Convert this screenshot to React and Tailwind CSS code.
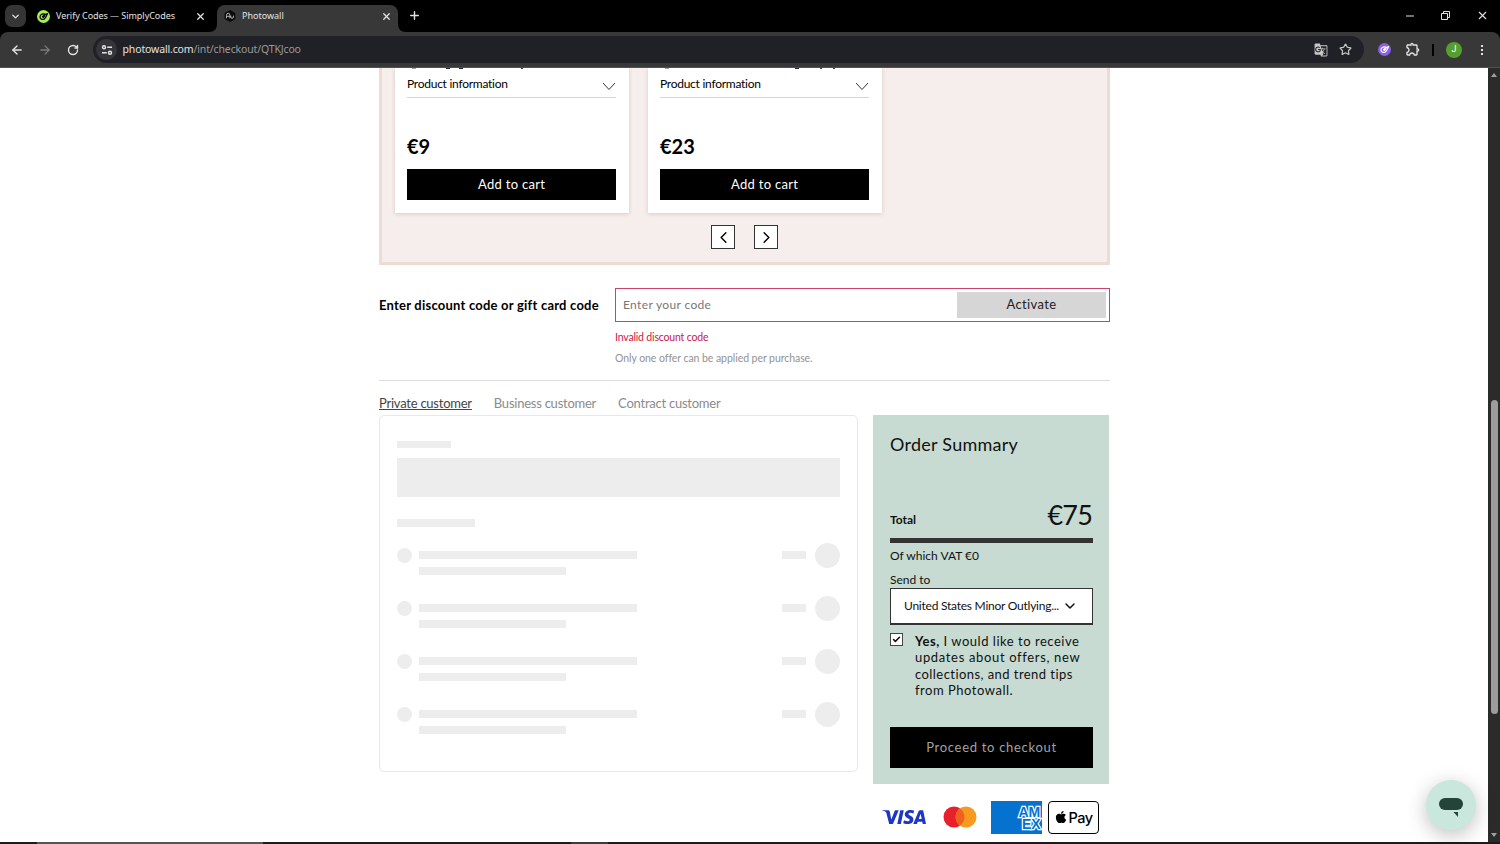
import { useState } from 'react'
import { ArrowLeft, ArrowRight, Check, ChevronDown, ChevronLeft, ChevronRight, Minus, Plus, RotateCw, Star, X } from 'lucide-react'
import { FaApple } from 'react-icons/fa'
import { MdGTranslate, MdOutlineExtension } from 'react-icons/md'
import { SiVisa } from 'react-icons/si'

const products = [
  { price: '€9', marks: ['ml-[5px] w-1 bg-gray-400', 'ml-[30px] w-1 bg-gray-800', 'ml-[9px] w-1 bg-gray-800', 'ml-[58px] w-0.5 bg-gray-700'] },
  { price: '€23', marks: ['ml-[5px] w-1 bg-gray-400', 'ml-[126px] w-1 bg-gray-800', 'ml-[21px] w-0.5 bg-gray-700', 'ml-[11px] w-0.5 bg-gray-700'] },
]

const customerTypes = ['Private customer', 'Business customer', 'Contract customer']

const LeafMark = ({ className }) => (
  <svg viewBox="0 0 13 13" className={className} fill="none" stroke="currentColor" strokeWidth="1.2" strokeLinecap="round" strokeLinejoin="round">
    <path d="M7.600 4.100C5 3.500 3 5 3 7c0 2.300 2.600 3 4.300 1.900C9 7.800 9.200 6 10.600 3.500 8.400 4 6.600 4.800 5.600 6.800" />
    <path d="M5.500 6.500l.9.900 1.600-1.700" />
  </svg>
)

const TabStrip = () => (
  <div className="flex h-8 items-start bg-black text-[#e3e3e3]">
    <button className="ml-[5px] mt-[5px] flex h-[22px] w-[21px] items-center justify-center rounded-[7px] bg-[#353535]">
      <ChevronDown size={11} strokeWidth={3} />
    </button>
    <div className="ml-[11px] flex h-8 w-[172px] items-center">
      <span className="flex h-[13px] w-[13px] items-center justify-center rounded-full bg-[#a5ee55] text-black">
        <LeafMark className="h-[13px] w-[13px]" />
      </span>
      <span className="ml-[6px] whitespace-nowrap text-[9px] tracking-[-0.05px]">Verify Codes — SimplyCodes</span>
      <X size={11} strokeWidth={2.800} className="ml-auto mr-[3.500px]" />
    </div>
    <svg viewBox="0 0 8 8" className="h-2 w-2 self-end text-[#383838]"><path d="M8 0v8H0c5 0 8-3 8-8z" fill="currentColor" /></svg>
    <div className="mt-[5px] flex h-[27px] w-[181px] items-center rounded-t-[8px] bg-[#383838] pb-[5px]">
      <svg viewBox="0 0 12 12" className="ml-[7px] h-3 w-3">
        <path d="M6 0l5.400 3v6L6 12 .6 9V3z" fill="#0b0b0d" />
        <path d="M2.500 8.300V5.500q0-2.300 1.700-2.300t1.700 2.300v2.800M2.500 6.300h3.400M6.800 5.700v1.400q0 1.200 1.300 1.200t1.300-1.200V5.700" stroke="#c9c9c9" strokeWidth=".9" fill="none" />
      </svg>
      <span className="ml-[6px] text-[9px]">Photowall</span>
      <X size={11} strokeWidth={2.800} className="ml-auto mr-[6.500px]" />
    </div>
    <svg viewBox="0 0 8 8" className="h-2 w-2 self-end text-[#383838]"><path d="M0 0v8h8C3 8 0 5 0 0z" fill="currentColor" /></svg>
    <Plus size={13} strokeWidth={2.600} className="ml-[1.500px] mt-[9px]" />
    <div className="ml-auto flex items-center pt-[9px]">
      <Minus size={12} strokeWidth={2} className="mr-[24px]" />
      <svg viewBox="0 0 11 11" className="mr-[25px] h-[11px] w-[11px]" fill="none" stroke="currentColor">
        <path d="M1.500 3.500h6v6h-6zM3.500 3V1.500h6v6H8" />
      </svg>
      <X size={13} strokeWidth={2} className="mr-[11px]" />
    </div>
  </div>
)

const Toolbar = () => (
  <div className="bg-black">
    <div className="flex h-9 items-center rounded-t-[8px] border-b border-[#55504e] bg-[#383838] text-[#e3e3e3]">
      <ArrowLeft size={14} strokeWidth={2.400} className="ml-[10px]" />
      <ArrowRight size={14} strokeWidth={2.200} className="ml-[14px] text-[#7c7c7c]" />
      <RotateCw size={12} strokeWidth={2.800} className="ml-[15px]" />
      <div className="ml-[14px] flex h-[27px] w-[1271px] items-center rounded-full bg-[#202126] pl-[3px]">
        <span className="flex h-[21px] w-[21px] items-center justify-center rounded-full bg-[#36363a]">
          <svg viewBox="0 0 12 12" className="h-3 w-3" fill="none" stroke="currentColor" strokeWidth="1.400">
            <circle cx="3" cy="3.200" r="1.500" /><path d="M6.200 3.200H11M1 8.800h4.800" /><circle cx="9" cy="8.800" r="1.500" />
          </svg>
        </span>
        <span className="ml-[5.500px] text-[10.500px] tracking-[-0.140px]">photowall.com<span className="text-[#9a9a9a]">/int/checkout/QTKJcoo</span></span>
        <MdGTranslate size={14} className="ml-auto text-[#c7c7c7]" />
        <Star size={13} strokeWidth={2.200} className="ml-[11px] mr-[12px] text-[#c7c7c7]" />
      </div>
      <span className="ml-[14px] flex h-[13px] w-[13px] items-center justify-center rounded-full bg-[#8b5cf0] text-white">
        <LeafMark className="h-[13px] w-[13px]" />
      </span>
      <MdOutlineExtension size={16} className="-mt-[2px] ml-[14px]" />
      <span className="ml-[11px] h-3 w-[2px] bg-black" />
      <span className="ml-[12px] flex h-4 w-4 items-center justify-center rounded-full bg-[#559f30] font-[Roboto] text-[9px] text-white">J</span>
      <span className="ml-[19px] flex flex-col gap-[2px]">
        <i className="h-[2px] w-[2px] bg-current" /><i className="h-[2px] w-[2px] bg-current" /><i className="h-[2px] w-[2px] bg-current" />
      </span>
    </div>
  </div>
)

const ProductCard = ({ price, marks }) => (
  <article className="h-[144.500px] w-[234.400px] bg-white px-3 shadow-[0_1px_4px_rgba(90,60,50,0.2)]">
    <div className="flex h-[2px]">
      {marks.map((mark, i) => <span key={i} className={`h-px ${mark}`} />)}
    </div>
    <div className="flex h-7 w-[209.400px] items-center justify-between border-b border-[#d6d6d6]">
      <span className="text-[12px] tracking-[-0.260px]">Product information</span>
      <svg viewBox="0 0 14 9" className="mt-[6px] h-[9px] w-[14px]" fill="none" stroke="#333"><path d="M1 1l6 6.500L13 1" /></svg>
    </div>
    <p className="mt-[36px] text-[20px] font-bold leading-6">{price}</p>
    <button className="mt-[11px] h-[31px] w-[209.400px] bg-black text-[13px] tracking-[0.300px] text-white">Add to cart</button>
  </article>
)

const SkeletonRow = () => (
  <div className="flex h-[53px] items-start">
    <span className="mt-[5px] h-[15px] w-[15px] rounded-full bg-[#ededed]" />
    <span className="ml-[7px] mt-[8.600px] flex flex-col gap-[8px]">
      <i className="h-[8px] w-[218px] bg-[#ededed]" />
      <i className="h-[8px] w-[147px] bg-[#ededed]" />
    </span>
    <span className="ml-auto mt-[8.600px] h-[8px] w-6 bg-[#ededed]" />
    <span className="ml-[9px] h-[25px] w-[25px] rounded-full bg-[#ededed]" />
  </div>
)

const OrderSummary = () => {
  const [updates, setUpdates] = useState(true)

  return (
    <section className="h-[369px] w-[236px] bg-[#c7dbd2] px-[17px] pt-[17px] text-[#111]">
      <h2 className="whitespace-nowrap text-[18px] leading-6 tracking-[0.250px]">Order Summary</h2>
      <div className="mt-[43px] flex h-[38px] items-end justify-between">
        <span className="text-[12px] font-bold leading-[34px]">Total</span>
        <span className="text-[27px] leading-[45px] tracking-[-0.800px]">€75</span>
      </div>
      <div className="mt-[0.500px] h-[5px] w-[203px] bg-[#333]" />
      <p className="mt-[5.500px] text-[12px] leading-4">Of which VAT €0</p>
      <p className="mt-2 text-[12px] leading-4">Send to</p>
      <button className="flex h-[37px] w-[203px] items-center border border-b-2 border-[#333] bg-white pl-[13px]">
        <span className="whitespace-nowrap text-[12px] tracking-[-0.240px]">United States Minor Outlying...</span>
        <ChevronDown size={16} strokeWidth={2.200} className="ml-[3px]" />
      </button>
      <label className="mt-[8px] flex">
        <input type="checkbox" checked={updates} onChange={() => setUpdates(!updates)} className="sr-only" />
        <span className="flex h-[13px] w-[13px] shrink-0 items-center justify-center border border-[#444] bg-white">
          {updates && <Check size={9} strokeWidth={4} />}
        </span>
        <span className="ml-3 whitespace-nowrap text-[13px] leading-[16.400px] tracking-[0.520px]">
          <b>Yes,</b> I would like to receive<br /><span className="tracking-[0.660px]">updates about offers, new</span><br /><span className="tracking-[0.440px]">collections, and trend tips</span><br />from Photowall.
        </span>
      </label>
      <button className="mt-[28px] h-[41px] w-[203px] bg-black pt-px text-[13px] tracking-[0.700px] text-[#a2a2a2]">Proceed to checkout</button>
    </section>
  )
}

const PaymentMethods = () => (
  <div className="mt-[17px] flex h-[33px] items-center pl-[9px]">
    <SiVisa size={44} className="-mt-[1px] shrink-0 text-[#1d36c4]" />
    <svg viewBox="0 0 34 22" className="-mt-px ml-[17px] h-[22px] w-[34px] shrink-0">
      <circle cx="11" cy="11" r="10.500" fill="#e8202b" /><circle cx="23" cy="11" r="10.500" fill="#f79a1f" />
      <path d="M17 2.400a10.500 10.500 0 0 1 0 17.200 10.500 10.500 0 0 1 0-17.200z" fill="#f0601f" />
    </svg>
    <svg viewBox="0 0 51 33" className="ml-[14px] h-[33px] w-[51px] shrink-0">
      <path d="M0 0h51v33H0z" fill="#0672d0" />
      <text fill="#0672d0" stroke="#fff" strokeWidth="2.400" paintOrder="stroke" fontFamily="Liberation Sans" fontWeight="700" fontSize="14">
        <tspan x="27.500" y="15.500">AM</tspan><tspan x="31" y="27.800">EX</tspan>
      </text>
    </svg>
    <div className="ml-[6px] flex h-[33px] w-[51px] shrink-0 items-center justify-center rounded-[4px] border border-black bg-white text-black">
      <FaApple size={14} className="-mt-[2px] shrink-0" />
      <span className="font-[Inter] text-[14.500px] font-medium tracking-[-0.500px]">Pay</span>
    </div>
  </div>
)

const Checkout = () => {
  const [code, setCode] = useState('')
  const [customer, setCustomer] = useState(customerTypes[0])

  return (
    <main className="ml-[379px] w-[731px] font-[Lato,sans-serif] text-black">
      <section className="h-[197px] border-[3px] border-t-0 border-[#ebddd6] bg-[#f6eeec]">
        <div className="flex gap-[18.600px] pl-[13px]">
          {products.map((product) => <ProductCard key={product.price} {...product} />)}
        </div>
        <div className="mt-[12.500px] flex justify-center gap-[19px]">
          <button className="flex h-[24px] w-[24px] items-center justify-center border border-[#333] bg-white"><ChevronLeft size={19} strokeWidth={1.800} className="shrink-0" /></button>
          <button className="flex h-[24px] w-[24px] items-center justify-center border border-[#333] bg-white"><ChevronRight size={19} strokeWidth={1.800} className="shrink-0" /></button>
        </div>
      </section>

      <section className="mt-[23px] flex h-[93px] border-b border-[#dcdcdc]">
        <h3 className="w-[236px] whitespace-nowrap text-[13px] font-bold leading-[34px] tracking-[0.220px]">Enter discount code or gift card code</h3>
        <div className="w-[495px]">
          <div className="flex h-[34px] border border-[#c9436a] bg-white p-[3px]">
            <input value={code} onChange={(event) => setCode(event.target.value)} placeholder="Enter your code" className="w-[338px] pl-[4px] text-[12px] tracking-[0.350px] outline-none placeholder:text-[#777]" />
            <button className="h-[26px] w-[149px] bg-[#d6d6d6] text-[13px] tracking-[0.400px] text-[#222]">Activate</button>
          </div>
          <p className="mt-[7px] text-[10.500px] leading-4 tracking-[-0.170px] text-[#c8184a]">Invalid discount code</p>
          <p className="mt-[5px] text-[10.500px] leading-4 tracking-[-0.060px] text-[#929292]">Only one offer can be applied per purchase.</p>
        </div>
      </section>

      <nav className="mt-[14px] flex h-5 items-start gap-[22px]">
        {customerTypes.map((type) => (
          <button key={type} onClick={() => setCustomer(type)} className={type === customer ? 'text-[13px] leading-4 tracking-[-0.240px] text-[#444] underline' : 'text-[13px] leading-4 tracking-[-0.240px] text-[#8b8b8b]'}>{type}</button>
        ))}
      </nav>
      <div className="flex gap-[15px]">
        <section className="h-[357px] w-[479px] rounded-[5px] border border-[#e8e8e8] px-[17px] pt-[25px]">
          <div className="h-[7px] w-[54.400px] bg-[#ededed]" />
          <div className="mt-[10px] h-[39px] bg-[#ededed]" />
          <div className="mb-[15.600px] mt-[22px] h-[8px] w-[78px] bg-[#ededed]" />
          {[0, 1, 2, 3].map((row) => <SkeletonRow key={row} />)}
        </section>
        <div className="w-[237px]">
          <OrderSummary />
          <PaymentMethods />
        </div>
      </div>
    </main>
  )
}

const App = () => (
  <div className="h-[844px] w-[1500px] overflow-hidden bg-black font-['Noto_Sans',sans-serif]">
    <TabStrip />
    <Toolbar />
    <div className="relative flex h-[774px] overflow-hidden bg-white">
      <div className="w-[1488px]"><Checkout /></div>
      <div className="flex w-3 flex-col items-center bg-[#2b2b2b]">
        <i className="mt-[5px] h-0 w-0 border-x-[3.500px] border-b-[4px] border-x-transparent border-b-[#a0a0a0]" />
        <i className="mt-[323px] h-[314px] w-[7px] rounded-full bg-[#9c9c9c]" />
        <i className="mt-[119px] h-0 w-0 border-x-[3.500px] border-t-[4px] border-x-transparent border-t-[#a0a0a0]" />
      </div>
      <button className="absolute bottom-[12px] right-6 flex h-[50px] w-[50px] items-center justify-center rounded-full bg-[#c9e7dc] shadow-[0_5px_20px_rgba(0,0,0,0.25)]">
        <svg viewBox="0 0 24 19" className="mt-1 h-[19px] w-6" fill="#24443a"><rect width="24" height="12" rx="6" /><path d="M14.500 14H19v5z" /></svg>
      </button>
    </div>
    <div className="flex h-[2px] bg-[#1b1b1b]">
      <span className="ml-[37px] h-[2px] w-[226px] bg-[#555]" />
      <span className="ml-[308px] h-[2px] w-[37px] bg-[#3c3c3c]" />
    </div>
  </div>
)

export default App
